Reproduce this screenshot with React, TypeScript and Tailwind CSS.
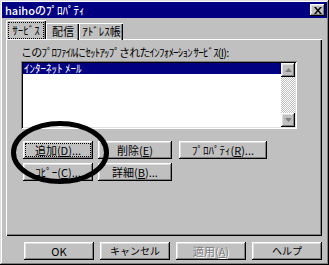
import React from "react";

const raised =
  "bg-[#c0c0c0] shadow-[inset_-1px_-1px_#000,inset_1px_1px_#fff,inset_-2px_-2px_#808080,inset_2px_2px_#dfdfdf]";

function Btn({ children, w = "w-[70px]", focus = false, disabled = false }: { children: React.ReactNode; w?: string; focus?: boolean; disabled?: boolean }) {
  return (
    <div className={`${raised} ${w} h-[18px] flex items-center justify-center p-[3px]`}>
      <div
        className={`w-full h-full flex items-center justify-center text-[11px] leading-none ${focus ? "outline outline-1 outline-dotted outline-black" : ""} ${disabled ? "text-[#808080] [text-shadow:1px_1px_#fff]" : "text-black"}`}
      >
        {children}
      </div>
    </div>
  );
}

function U({ c }: { c: string }) {
  return <span className="underline underline-offset-1">{c}</span>;
}

function ScrollArrow({ up }: { up: boolean }) {
  return (
    <div className={`${raised} w-[14px] h-[14px] flex items-center justify-center`}>
      <svg width="7" height="4" viewBox="0 0 7 4">
        {up ? <polygon points="3.5,0 7,4 0,4" fill="#808080" /> : <polygon points="0,0 7,0 3.5,4" fill="#808080" />}
      </svg>
    </div>
  );
}

export default function App() {
  return (
    <div
      className="w-[329px] h-[265px] bg-[#c0c0c0] relative overflow-hidden p-[2px] shadow-[inset_-1px_-1px_#000,inset_1px_1px_#dfdfdf,inset_-2px_-2px_#808080,inset_2px_2px_#fff]"
      style={{ fontFamily: '"Noto Sans CJK JP", "Liberation Sans", sans-serif' }}
    >
      {/* title bar */}
      <div className="h-[16px] bg-[#000080] flex items-center justify-between pl-[3px] pr-[2px]">
        <span className="text-white text-[11px] leading-none font-medium">haihoのﾌﾟﾛﾊﾟﾃｨ</span>
        <div className={`${raised} w-[15px] h-[12px] flex items-center justify-center`}>
          <svg width="8" height="7" viewBox="0 0 8 7">
            <path d="M0 0 L2 0 L4 2.5 L6 0 L8 0 L5 3.5 L8 7 L6 7 L4 4.5 L2 7 L0 7 L3 3.5 Z" fill="#000" />
          </svg>
        </div>
      </div>

      <div className="px-[4px]">
        {/* tabs */}
        <div className="flex items-end h-[19px] mt-[2px] relative z-10">
          <div className="h-[19px] w-[40px] bg-[#c0c0c0] border-t border-l border-white shadow-[inset_-1px_0_#000,inset_-2px_0_#808080] rounded-tl-[2px] flex items-center justify-center pr-[1px]">
            <span className="text-[11px] leading-none outline outline-1 outline-dotted outline-black px-[3px] py-[2px]">ｻｰﾋﾞｽ</span>
          </div>
          <div className="h-[17px] w-[33px] border-t border-l border-white shadow-[inset_-1px_0_#000,inset_-2px_0_#808080] flex items-center justify-center mb-[-1px] pb-[1px]">
            <span className="text-[11px] leading-none">配信</span>
          </div>
          <div className="h-[17px] w-[44px] border-t border-l border-white shadow-[inset_-1px_0_#000,inset_-2px_0_#808080] flex items-center justify-center mb-[-1px] pb-[1px]">
            <span className="text-[11px] leading-none">ｱﾄﾞﾚｽ帳</span>
          </div>
        </div>

        {/* panel */}
        <div className="h-[197px] mr-[1px] border-t border-l border-white shadow-[inset_-1px_-1px_#000,inset_-2px_-2px_#808080] pl-[14px] pr-[25px] pt-[6px]">
          <div className="text-[11px] leading-none h-[13px] flex items-center tracking-[-0.8px]">
            このﾌﾟﾛﾌｧｲﾙにｾｯﾄｱｯﾌﾟされたｲﾝﾌｫﾒｰｼｮﾝ ｻｰﾋﾞｽ(<U c="I" />):
          </div>
          <div className="mt-[2px] h-[68px] bg-white flex p-[2px] shadow-[inset_1px_1px_#808080,inset_-1px_-1px_#fff,inset_2px_2px_#000,inset_-2px_-2px_#dfdfdf]">
            <div className="flex-1">
              <div className="h-[11px] bg-[#000080] text-white text-[11px] leading-none flex items-center pl-[1px]">ｲﾝﾀｰﾈｯﾄ ﾒｰﾙ</div>
            </div>
            <div className="w-[14px] flex flex-col bg-[repeating-conic-gradient(#c0c0c0_0_25%,#fff_0_50%)] bg-[length:2px_2px]">
              <ScrollArrow up />
              <div className="flex-1" />
              <ScrollArrow up={false} />
            </div>
          </div>

          <div className="mt-[12px] flex flex-col gap-[4px] pl-[2px]">
            <div className="flex gap-[5px]">
              <Btn focus>追加(<U c="D" />)...</Btn>
              <Btn w="w-[74px]">削除(<U c="E" />)</Btn>
              <div className="ml-[2px]">
                <Btn w="w-[88px]">ﾌﾟﾛﾊﾟﾃｨ(<U c="R" />)...</Btn>
              </div>
            </div>
            <div className="flex gap-[5px]">
              <Btn>ｺﾋﾟｰ(<U c="C" />)...</Btn>
              <Btn w="w-[74px]">詳細(<U c="B" />)...</Btn>
            </div>
          </div>
        </div>

        {/* bottom buttons */}
        <div className="mt-[6px] flex gap-[6px] pl-[18px]">
          <Btn>OK</Btn>
          <Btn><span className="text-[10px]">キャンセル</span></Btn>
          <Btn disabled>適用(<U c="A" />)</Btn>
          <Btn><span className="text-[10px]">ヘルプ</span></Btn>
        </div>
      </div>

      {/* hand-drawn circle over the add button */}
      <svg className="absolute left-0 top-0 pointer-events-none" width="329" height="265">
        <ellipse cx="60" cy="152.5" rx="46.5" ry="29" fill="none" stroke="#000" strokeWidth="5" />
      </svg>
    </div>
  );
}
